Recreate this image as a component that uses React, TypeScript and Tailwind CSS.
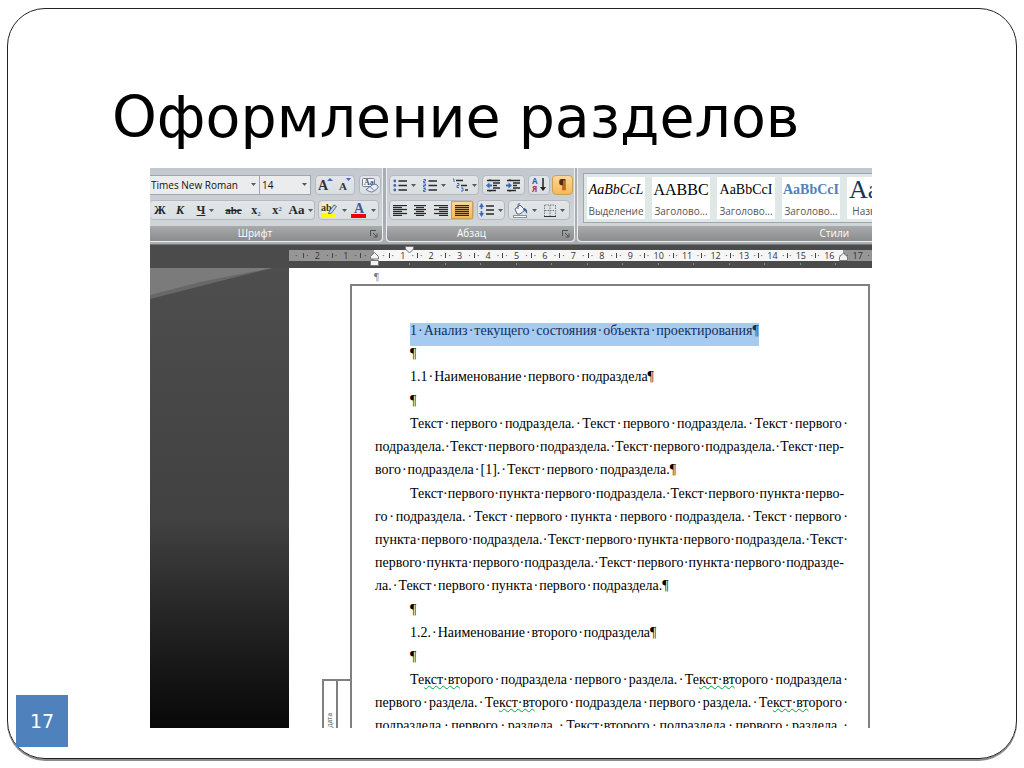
import React from 'react';

const FONT_UI = "font-['Open_Sans','Noto_Sans',sans-serif]";
const FONT_DOC = "font-['Liberation_Serif',serif]";

// Petite flèche des menus déroulants
function Caret() {
  return (
    <svg width="5" height="3" viewBox="0 0 5 3" className="shrink-0" aria-hidden="true">
      <path d="M0 0h5L2.500 3z" fill="#555b63" />
    </svg>
  );
}

function Tool({ label, className = '', children }: { label: string; className?: string; children: React.ReactNode }) {
  return (
    <button type="button" aria-label={label} className={`flex h-full items-center justify-center gap-1 ${className}`}>
      {children}
    </button>
  );
}

function ToolSet({ className = '', children }: { className?: string; children: React.ReactNode }) {
  return (
    <div className={`flex h-5 shrink-0 items-stretch rounded-sm border border-[#b4bac0] bg-linear-to-b from-[#e3e6e9] to-[#d9dfe1] ${className}`}>
      {children}
    </div>
  );
}

function Group({ title, launcher = true, className = '', titleClass = 'justify-center', children }: {
  title: string;
  launcher?: boolean;
  className?: string;
  titleClass?: string;
  children: React.ReactNode;
}) {
  return (
    <section className={`flex flex-col border-[#eceef0] bg-linear-to-b from-[#c3c8d0] via-[#cdd1d6] to-[#d2d8da] ${className}`}>
      <div className="flex-1">{children}</div>
      <div className={`relative flex h-[15px] items-center bg-linear-to-b from-[#a9aaab] to-[#8b8c8d] text-[10px] leading-[15px] text-white ${titleClass}`}>
        <span>{title}</span>
        {launcher && (
          <button type="button" aria-label={`${title}: параметры`} className="absolute right-1 top-1">
            <svg width="8" height="8" viewBox="0 0 8 8" fill="none" stroke="#4c5056">
              <path d="M.5 6V.5H6M3 3l3.500 3.500M7 3.500V7H3.500" />
            </svg>
          </button>
        )}
      </div>
    </section>
  );
}

function Lines({ rows }: { rows: number[][] }) {
  return (
    <svg width="14" height="11" viewBox="0 0 14 11" stroke="#2a2a2a" aria-hidden="true">
      {rows.map(([from, to], i) => (
        <path key={i} d={`M${from} ${i * 2 + 0.5}H${to}`} strokeWidth="1.300" />
      ))}
    </svg>
  );
}

function ListIcon({ kind }: { kind: 'bullets' | 'numbers' | 'levels' }) {
  if (kind === 'levels') {
    return (
      <svg width="16" height="14" viewBox="0 0 16 14" aria-hidden="true">
        <path d="M1 1h1v3M5 5.500h2v2H5v2h2M9 10h2v3H9" fill="none" stroke="#4664b4" />
        <path d="M4 2.500h7M9 7.500h6M13 12h3" stroke="#2a2a2a" strokeWidth="1.500" />
      </svg>
    );
  }
  return (
    <svg width="14" height="13" viewBox="0 0 14 13" aria-hidden="true">
      {[2, 6.5, 11].map((y) => (
        <g key={y}>
          {kind === 'bullets'
            ? <circle cx="1.800" cy={y} r="1.400" fill="#4664b4" />
            : <path d={`M.5 ${y - 1.5}h2v1.500h-2v1.500h2`} fill="none" stroke="#4664b4" />}
          <path d={`M5.500 ${y}H14`} stroke="#2a2a2a" strokeWidth="1.500" />
        </g>
      ))}
    </svg>
  );
}

function IndentIcon({ out = false }: { out?: boolean }) {
  return (
    <svg width="15" height="13" viewBox="0 0 15 13" aria-hidden="true">
      <path d="M1 1.500h13M7 4h7M7 6.500h4M7 9h7M1 11.500h9" stroke="#2a2a2a" strokeWidth="1.500" />
      <path d={out ? 'M0 6.500l3.500-3v2H6v2H3.500v2z' : 'M6 6.500l-3.500-3v2H0v2h2.500v2z'} fill="#3d67bd" />
      <path d="M4 0v2M4 11v2" stroke="#2a2a2a" />
    </svg>
  );
}

function FontGroup() {
  return (
    <Group title="Шрифт" className="w-[233px] shrink-0 rounded-br border-b border-r" titleClass="justify-center rounded-br pr-[22px]">
      <div className="flex pt-[7px]">
        <label className="relative w-[110px]">
          <span className="sr-only">Шрифт</span>
          <select className="block h-5 w-full appearance-none border border-l-0 border-[#a2a7ad] bg-[#ebeced] pl-px text-[10px] leading-[18px] text-[#111]">
            <option>Times New Roman</option>
          </select>
          <span className="absolute right-1 top-2"><Caret /></span>
        </label>
        <label className="relative w-[51px]">
          <span className="sr-only">Размер</span>
          <select className="block h-5 w-full appearance-none border border-l-0 border-[#a2a7ad] bg-[#ebeced] pl-0.5 text-[10px] leading-[18px] text-[#111]">
            <option>14</option>
          </select>
          <span className="absolute right-1 top-2"><Caret /></span>
        </label>
        <ToolSet className="ml-1 w-10">
          <Tool label="Увеличить размер" className="flex-1">
            <svg width="15" height="16" viewBox="0 0 15 16" className={FONT_DOC}>
              <text x="0" y="13" fontSize="14" fontWeight="bold" fill="#333">A</text>
              <path d="M9 4l3-3 3 3z" fill="#3d67bd" />
            </svg>
          </Tool>
          <Tool label="Уменьшить размер" className="flex-1">
            <svg width="14" height="16" viewBox="0 0 14 16" className={FONT_DOC}>
              <text x="1" y="13" fontSize="11" fontWeight="bold" fill="#333">A</text>
              <path d="M8 1h5l-2.500 3z" fill="#3d67bd" />
            </svg>
          </Tool>
        </ToolSet>
        <ToolSet className="ml-1 w-[22px]">
          <Tool label="Очистить формат" className="flex-1">
            <svg width="18" height="16" viewBox="0 0 18 16" className={FONT_DOC}>
              <rect x="1.500" y="1.500" width="12" height="8" rx="1" fill="#f4f6f9" stroke="#6e7f9c" />
              <text x="3" y="8" fontSize="8" fontWeight="bold" fill="#3c4f77">Aa</text>
              <path d="M5 12.500l7-5q2-1 4 .5t.500 3.500l-4 3q-2 1-4 0z" fill="#e9ecf5" stroke="#65769c" />
              <path d="M9 9.500l4 4" stroke="#65769c" />
            </svg>
          </Tool>
        </ToolSet>
      </div>
      <div className={`flex pt-[5px] text-[#262626] ${FONT_DOC}`}>
        <ToolSet className="w-[165px] border-l-0 text-xs font-bold">
          <Tool label="Полужирный" className="w-5">Ж</Tool>
          <Tool label="Курсив" className="w-5 italic">К</Tool>
          <Tool label="Подчеркнутый" className="w-[31px]"><span className="underline">Ч</span><Caret /></Tool>
          <Tool label="Зачеркнутый" className="w-[25px] text-[11px] line-through">abc</Tool>
          <Tool label="Подстрочный" className="w-5"><span>x<sub className="text-[7px] text-[#3d67bd]">2</sub></span></Tool>
          <Tool label="Надстрочный" className="w-[22px]"><span>x<sup className="text-[7px] text-[#3d67bd]">2</sup></span></Tool>
          <Tool label="Регистр" className="w-[26px] text-[13px]">Aa<Caret /></Tool>
        </ToolSet>
        <ToolSet className="ml-[3px] w-[61px]">
          <Tool label="Цвет выделения" className="w-[30px]">
            <svg width="17" height="16" viewBox="0 0 17 16">
              <rect x="1" y="1" width="9" height="10" fill="#fbf3a4" />
              <text x="0" y="9" fontSize="10" fontWeight="bold" fill="#333">ab</text>
              <path d="M8 10l5-7 2.500 1.500-5 6.500-3 1z" fill="#cdd9ee" stroke="#4a669d" />
              <rect x="1" y="12" width="14" height="4" fill="#ff0" />
            </svg>
            <Caret />
          </Tool>
          <Tool label="Цвет текста" className="w-[30px]">
            <svg width="16" height="16" viewBox="0 0 16 16">
              <text x="3" y="11" fontSize="14" fontWeight="bold" fill="#3d5a96">A</text>
              <rect x="0" y="12" width="15" height="4" fill="#f00000" />
            </svg>
            <Caret />
          </Tool>
        </ToolSet>
      </div>
    </Group>
  );
}

const ACTIVE = 'border border-[#c9a158] bg-linear-to-b from-[#fbd79b] to-[#f7b94f]';

function ParagraphGroup() {
  return (
    <Group title="Абзац" className="ml-[3px] w-[189px] shrink-0 rounded-b border-x border-b" titleClass="justify-center rounded-b pr-[18px]">
      <div className="flex pl-0.5 pt-[7px]">
        <ToolSet className="w-[90px]">
          <Tool label="Маркеры" className="w-[30px]"><ListIcon kind="bullets" /><Caret /></Tool>
          <Tool label="Нумерация" className="w-8"><ListIcon kind="numbers" /><Caret /></Tool>
          <Tool label="Многоуровневый список" className="w-7 gap-0.5"><ListIcon kind="levels" /><Caret /></Tool>
        </ToolSet>
        <ToolSet className="ml-[3px] w-[43px]">
          <Tool label="Уменьшить отступ" className="flex-1"><IndentIcon out /></Tool>
          <Tool label="Увеличить отступ" className="flex-1"><IndentIcon /></Tool>
        </ToolSet>
        <ToolSet className="ml-[3px] w-[22px]">
          <Tool label="Сортировка" className="flex-1">
            <svg width="14" height="18" viewBox="0 0 14 18">
              <text x="0" y="8" fontSize="8" fontWeight="bold" fill="#3d5ea8">А</text>
              <text x="0" y="16" fontSize="8" fontWeight="bold" fill="#a63a4a">Я</text>
              <path d="M11 2v11" stroke="#222" strokeWidth="1.500" />
              <path d="M8 11h6l-3 4z" fill="#222" />
            </svg>
          </Tool>
        </ToolSet>
        <button type="button" className={`ml-[2px] h-5 w-[21px] rounded-sm text-xs font-bold text-[#4a3010] ${ACTIVE}`}>¶</button>
      </div>
      <div className="flex pl-0.5 pt-[5px]">
        <ToolSet className="w-[85px]">
          <Tool label="По левому краю" className="flex-1"><Lines rows={[[0, 14], [0, 9], [0, 14], [0, 9], [0, 14], [0, 9]]} /></Tool>
          <Tool label="По центру" className="flex-1"><Lines rows={[[1, 13], [3, 11], [1, 13], [3, 11], [1, 13], [3, 11]]} /></Tool>
          <Tool label="По правому краю" className="flex-1"><Lines rows={[[0, 14], [5, 14], [0, 14], [5, 14], [0, 14], [5, 14]]} /></Tool>
          <Tool label="По ширине" className={`flex-1 ${ACTIVE}`}><Lines rows={[[0, 14], [0, 14], [0, 14], [0, 14], [0, 14], [0, 14]]} /></Tool>
        </ToolSet>
        <ToolSet className="ml-[3px] w-[28px]">
          <Tool label="Интервал" className="flex-1">
            <svg width="15" height="14" viewBox="0 0 15 14">
              <path d="M0 4l2.500-4L5 4H3.300v2H1.700V4zM0 10l2.500 4L5 10H3.300V8H1.700v2z" fill="#3d67bd" />
              <path d="M7 3h8M7 7h8M7 11h8" stroke="#2a2a2a" strokeWidth="1.400" />
            </svg>
            <Caret />
          </Tool>
        </ToolSet>
        <ToolSet className="ml-[3px] w-[62px]">
          <Tool label="Заливка" className="w-[31px]">
            <svg width="16" height="15" viewBox="0 0 16 15">
              <path d="M3 6l5-4 5 5-5 4H5z" fill="#f3f5f8" stroke="#53688f" />
              <path d="M6 6V2q0-2 2-1" fill="none" stroke="#53688f" />
              <path d="M12 5q4 1 3 6-1-3-4-4z" fill="#3d5a96" />
              <rect x="1.500" y="12.500" width="13" height="2" fill="#fff" stroke="#8b929b" />
            </svg>
            <Caret />
          </Tool>
          <Tool label="Границы" className="w-[29px]">
            <svg width="12" height="13" viewBox="0 0 12 13" fill="none">
              <path d="M.5 1v11M11.500 1v11M6 1v11M1 1h10M1 6.500h10" stroke="#737982" strokeDasharray="1.500 1" />
              <path d="M0 12.500h12" stroke="#333" />
            </svg>
            <Caret />
          </Tool>
        </ToolSet>
      </div>
    </Group>
  );
}

const styleCards = [
  { sample: 'AaBbCcL', name: 'Выделение', look: 'text-sm italic text-black' },
  { sample: 'AABBC', name: 'Заголово...', look: 'text-base text-black' },
  { sample: 'AaBbCcI', name: 'Заголово...', look: 'text-sm text-black' },
  { sample: 'AaBbCcI', name: 'Заголово...', look: 'text-sm font-bold text-[#4f81bd]' },
  { sample: 'Aa', name: 'Название', look: 'self-start pl-0.5 text-[26px] text-[#17365d]' },
];

function StylesGroup() {
  return (
    <Group title="Стили" launcher={false} className="ml-[2px] min-w-0 flex-1 rounded-bl border-b border-l" titleClass="justify-end rounded-bl pr-[23px]">
      <div className="ml-[5px] mt-[5px] flex h-[50px] gap-[7px] overflow-hidden border border-r-0 border-[#9fa6ac] bg-[#dfe7e7] py-[3px] pl-[3px]">
        {styleCards.map((card, i) => (
          <button key={i} type="button" className="flex w-[58px] shrink-0 flex-col items-center bg-white">
            <span className={`flex h-[26px] items-center whitespace-nowrap leading-[26px] ${FONT_DOC} ${card.look}`}>{card.sample}</span>
            <span className="whitespace-nowrap text-[10px] leading-4 text-[#555]">{card.name}</span>
          </button>
        ))}
      </div>
    </Group>
  );
}

// Numéros de la règle, en centimètres depuis la marge gauche
const rulerMarks = Array.from({ length: 20 }, (_, i) => i - 2);

function Ruler() {
  return (
    <div className="flex h-6 bg-[#4b4b4b] shadow-[inset_0_1px_0_#777]">
      <div className="w-[139px] shrink-0" />
      <div className="relative min-w-0 flex-1 pt-1.5">
        <div className="grid h-[11px] grid-cols-[repeat(41,minmax(0,1fr))] bg-[linear-gradient(to_right,#969696_14.6%,#f6f6f6_14.6%,#f6f6f6_95%,#969696_95%)] text-[9px] leading-[11px] text-[#333]">
          <span className="text-center">·</span>
          {rulerMarks.map((n) => (
            <span key={n} className="relative col-span-2 flex items-center justify-around">
              <i className="absolute left-0 top-[3px] h-[5px] w-px bg-[#444]" />
              <span>·</span>
              <span>{n === 0 ? '' : Math.abs(n)}</span>
              <span>·</span>
            </span>
          ))}
        </div>
        <div className="mt-0.5 flex justify-between pl-[120px] pr-9">
          {Array.from({ length: 13 }, (_, i) => <i key={i} className="h-0.5 w-px bg-[#888]" />)}
        </div>
        {/* Repères de retrait */}
        <svg className="absolute left-[81px] top-2" width="9" height="14" viewBox="0 0 9 14">
          <path d="M.5 7V4.500L4.500.5l4 4V7zM.5 8.500h8v5h-8z" fill="#f2f2f2" stroke="#777" />
        </svg>
        <svg className="absolute left-[116px] top-0.5" width="9" height="8" viewBox="0 0 9 8">
          <path d="M.5.5h8V3l-4 4-4-4z" fill="#f2f2f2" stroke="#777" />
        </svg>
        <svg className="absolute right-6 top-2" width="9" height="9" viewBox="0 0 9 9">
          <path d="M.5 8.500V5l4-4 4 4v3.500z" fill="#f2f2f2" stroke="#777" />
        </svg>
      </div>
    </div>
  );
}

type Para = { lines: string[]; kind?: 'title' | 'selected' | 'body' };

const paragraphs: Para[] = [
  { lines: ['1·Анализ·текущего·состояния·объекта·проектирования¶'], kind: 'selected' },
  { lines: ['¶'] },
  { lines: ['1.1·Наименование·первого·подраздела¶'], kind: 'title' },
  { lines: ['¶'] },
  {
    kind: 'body',
    lines: [
      'Текст·первого·подраздела.·Текст·первого·подраздела.·Текст·первого·',
      'подраздела.·Текст·первого·подраздела.·Текст·первого·подраздела.·Текст·пер-',
      'вого·подраздела·[1].·Текст·первого·подраздела.¶',
    ],
  },
  {
    kind: 'body',
    lines: [
      'Текст·первого·пункта·первого·подраздела.·Текст·первого·пункта·перво-',
      'го·подраздела.·Текст·первого·пункта·первого·подраздела.·Текст·первого·',
      'пункта·первого·подраздела.·Текст·первого·пункта·первого·подраздела.·Текст·',
      'первого·пункта·первого·подраздела.·Текст·первого·пункта·первого·подразде-',
      'ла.·Текст·первого·пункта·первого·подраздела.¶',
    ],
  },
  { lines: ['¶'] },
  { lines: ['1.2.·Наименование·второго·подраздела¶'], kind: 'title' },
  { lines: ['¶'] },
  {
    kind: 'body',
    lines: [
      'Текст·второго·подраздела·первого·раздела.·Текст·второго·подраздела·',
      'первого·раздела.·Текст·второго·подраздела·первого·раздела.·Текст·второго·',
      'подраздела·первого·раздела.·Текст·второго·подраздела·первого·раздела.·',
    ],
  },
];

// Découpe une ligne en mots et points d'espace, pour répartir le blanc
function Line({ text, indent, selected = false }: { text: string; indent: boolean; selected?: boolean }) {
  const spread = !text.endsWith('¶');
  const parts = text.split(/(Текст·второго|·)/).filter(Boolean);
  return (
    <div className={`flex whitespace-nowrap ${spread ? 'justify-between' : 'gap-px'} ${indent ? 'ml-[35px]' : ''} ${text.endsWith('·') ? '-mr-1' : ''} ${selected ? 'w-fit bg-[#a6caf0] pb-1 text-[#12305c]' : ''}`}>
      {parts.map((part, i) =>
        part === 'Текст·второго' ? (
          <span key={i}>
            Те<span className="underline decoration-green-600 decoration-wavy decoration-1 underline-offset-1 [text-decoration-skip-ink:none]">кст·вт</span>орого
          </span>
        ) : (
          <span key={i} className={selected ? '-mt-1' : ''}>{part}</span>
        ),
      )}
    </div>
  );
}

function DocumentText() {
  return (
    <div className={`pl-[23px] pr-6 pt-[33px] text-sm leading-[23px] text-black ${FONT_DOC}`}>
      {paragraphs.map((p, i) => (
        <div key={i} className={p.kind === 'selected' ? '-mb-1 pt-1' : p.kind ? 'mb-px' : ''}>
          {p.lines.map((line, j) => <Line key={j} text={line} indent={j === 0} selected={p.kind === 'selected'} />)}
        </div>
      ))}
    </div>
  );
}

export default function App() {
  return (
    <div className="h-screen overflow-hidden bg-white px-[7px] pb-[9px] pt-2 font-['DejaVu_Sans',sans-serif] text-black">
      <main className="flex h-full flex-col rounded-[38px] border border-[#222] shadow-[0_2px_0_#8a8a8a]">
        <h1 className="flex h-[159px] shrink-0 items-end whitespace-nowrap pb-[18px] pl-[104px] text-[57px] leading-[66px]">
          Оформление разделов
        </h1>

        <div className="flex min-h-0 flex-1">
          <aside className="flex w-[142px] shrink-0 items-end pb-[11px] pl-2">
            <div className="flex size-[52px] items-center justify-center bg-[#4f81bd] text-[19px] text-white">17</div>
          </aside>

          <article className="mb-[30px] flex min-w-0 flex-1 flex-col overflow-hidden">
            {/* Ruban */}
            <header className={`flex h-[76px] shrink-0 bg-[#a9aeb5] pb-0.5 ${FONT_UI}`}>
              <FontGroup />
              <ParagraphGroup />
              <StylesGroup />
            </header>
            <div className={FONT_UI}><Ruler /></div>

            {/* Document */}
            <div className="flex min-h-0 flex-1">
              <div className="w-[139px] shrink-0 bg-linear-to-b from-[#4e4e4e] via-[#414141] via-55% to-[#080808]">
                <svg width="122" height="32" viewBox="0 0 122 32" className="block">
                  <path d="M0 0h122L0 31z" fill="#686868" />
                  <path d="M0 0h122L50 14 0 27z" fill="#7b7b7b" />
                </svg>
              </div>
              <div className="flex w-[61px] shrink-0 flex-col justify-end bg-white pl-[33px]">
                <div className="flex h-[49px] border-l-2 border-t-2 border-[#808080]">
                  <div className={`flex w-[14px] items-center justify-center overflow-hidden border-r-2 border-[#808080] text-[8px] text-[#555] ${FONT_DOC}`}>
                    <span className="mt-8 rotate-180 leading-none [writing-mode:vertical-rl]">дата</span>
                  </div>
                </div>
              </div>
              <div className="flex min-w-0 flex-1 flex-col pr-0.5">
                <div className={`h-4 shrink-0 pl-6 text-[11px] leading-4 text-[#777] ${FONT_DOC}`}>¶</div>
                <div className="min-h-0 flex-1 overflow-hidden border-x-2 border-t-2 border-[#808080]">
                  <DocumentText />
                </div>
              </div>
            </div>
          </article>
          <div className="w-[144px] shrink-0" />
        </div>
      </main>
    </div>
  );
}
